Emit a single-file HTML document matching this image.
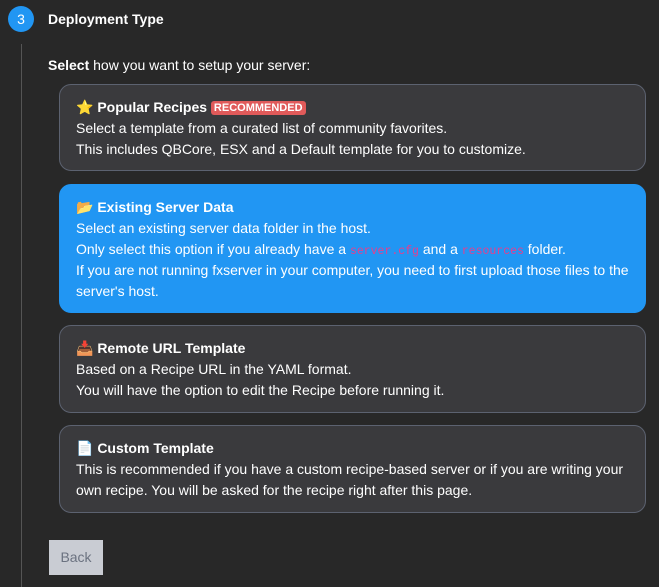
<!DOCTYPE html>
<html><head><meta charset="utf-8"><style>
html,body{margin:0;width:659px;height:587px;overflow:hidden}
body{background:#282828;font-family:"Segoe UI","Liberation Sans",sans-serif;color:#fff;font-size:14px;position:relative}
.circ{position:absolute;left:8px;top:6px;width:26px;height:26px;border-radius:50%;background:#2196f3;color:#fff;font-size:14px;text-align:center;line-height:26px}
.title{position:absolute;left:48px;top:9px;font-weight:bold;font-size:14px;line-height:20px}
.vline{position:absolute;left:21px;top:44px;width:1px;height:543px;background:#555}
.sel{position:absolute;left:48px;top:55px;line-height:20px}
.card{position:absolute;left:59px;width:556px;padding:12px 13px 0 16px;background:#3a3a3d;border:1px solid #5c6270;border-radius:12px;line-height:21px;box-sizing:content-box}
.card b{font-size:14px}
.blue{background:#2196f3;border-color:#2196f3}
.badge{background:#e05a5a;color:#fff;font-size:11px;font-weight:bold;padding:1px 3px;border-radius:3px;vertical-align:1px;line-height:1}
code{font-family:"Liberation Mono",monospace;color:#e83e8c;font-size:11.5px;line-height:1}
.back{position:absolute;left:49px;top:540px;width:54px;height:35px;background:#c9ccd3;color:#6b7280;text-align:center;line-height:35px;font-size:14px}
</style></head><body>
<div class="circ">3</div>
<div class="title">Deployment Type</div>
<div class="vline"></div>
<div class="sel"><b>Select</b> how you want to setup your server:</div>
<div class="card" style="top:84px;height:73px"><b>⭐ Popular Recipes</b> <span class="badge">RECOMMENDED</span><br>Select a template from a curated list of community favorites.<br>This includes QBCore, ESX and a Default template for you to customize.</div>
<div class="card blue" style="top:184px;height:115px"><b>📂 Existing Server Data</b><br>Select an existing server data folder in the host.<br>Only select this option if you already have a <code>server.cfg</code> and a <code>resources</code> folder.<br>If you are not running fxserver in your computer, you need to first upload those files to the server's host.</div>
<div class="card" style="top:325px;height:74px"><b>📥 Remote URL Template</b><br>Based on a Recipe URL in the YAML format.<br>You will have the option to edit the Recipe before running it.</div>
<div class="card" style="top:425px;height:74px"><b>📄 Custom Template</b><br>This is recommended if you have a custom recipe-based server or if you are writing your own recipe. You will be asked for the recipe right after this page.</div>
<div class="back">Back</div>
</body></html>
